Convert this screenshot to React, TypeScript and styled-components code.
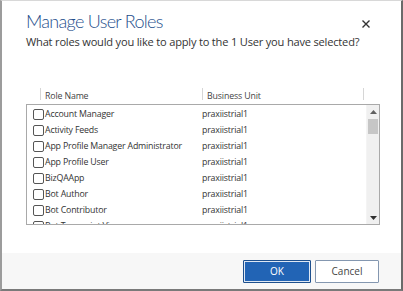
import React from "react";
import styled, { createGlobalStyle } from "styled-components";

const Global = createGlobalStyle`
  html, body { margin: 0; padding: 0; background: #fff; }
  * { box-sizing: border-box; }
`;

const Dialog = styled.div`
  width: 403px;
  height: 291px;
  display: flex;
  flex-direction: column;
  background: #fff;
  border-top: 1px solid #d8d8d8;
  border-left: 2px solid #9c9c9c;
  border-right: 2px solid #6a6a6a;
  border-bottom: 2px solid #7a7a7a;
  font-family: "Open Sans", "Noto Sans", sans-serif;
  color: #333;
  overflow: hidden;
`;

const Header = styled.div`
  display: flex;
  justify-content: space-between;
  align-items: flex-start;
  padding: 7px 30px 0 24px;
`;

const TitleBlock = styled.div`
  display: flex;
  flex-direction: column;
`;

const Title = styled.h1`
  margin: 0;
  font-family: Lato, "Open Sans", sans-serif;
  font-weight: 300;
  font-size: 18px;
  letter-spacing: -0.7px;
  line-height: 26px;
  color: #1e4e8c;
`;

const Subtitle = styled.p`
  margin: 0;
  font-size: 11.1px;
  letter-spacing: -0.2px;
  line-height: 16px;
  white-space: nowrap;
  color: #333;
`;

const Close = styled.button`
  border: none;
  background: none;
  padding: 0;
  margin-top: 11px;
  width: 10px;
  height: 10px;
  display: flex;
  cursor: pointer;
`;

const ColumnHeader = styled.div`
  display: flex;
  margin: 38px 0 0 38px;
  height: 12px;
`;

const HeaderCell = styled.div`
  width: 162px;
  border-left: 1px solid #d6d6d6;
  padding: 2px 0 0 4px;
  font-size: 8.8px;
  letter-spacing: -0.15px;
  line-height: 13px;
  color: #444;
  &:last-child { border-right: 1px solid #d6d6d6; }
`;

const ListBox = styled.div`
  margin: 4px 21px 0 24px;
  height: 121px;
  border: 1px solid #a9a9a9;
  display: flex;
  overflow: hidden;
`;

const Rows = styled.div`
  flex: 1;
  padding-top: 1px;
`;

const Row = styled.div`
  display: flex;
  align-items: center;
  height: 16px;
  padding-left: 6px;
  font-size: 8.8px;
  letter-spacing: -0.18px;
  color: #333;
`;

const NameCell = styled.div`
  width: 169px;
  display: flex;
  align-items: center;
  gap: 1px;
  white-space: nowrap;
`;

const Check = styled.span`
  width: 11px;
  height: 11px;
  border: 1px solid #555;
  border-radius: 2px;
  background: #fff;
  flex: none;
`;

const UnitCell = styled.div`
  white-space: nowrap;
`;

const Scrollbar = styled.div`
  width: 13px;
  background: #f0f0f0;
  display: flex;
  flex-direction: column;
  align-items: center;
  border-left: 1px solid #f4f4f4;
`;

const Arrow = styled.div`
  height: 13px;
  display: flex;
  align-items: center;
  justify-content: center;
  width: 100%;
`;

const Thumb = styled.div`
  width: 10px;
  height: 15px;
  background: #c6c6c6;
  margin-top: 1px;
`;

const Track = styled.div`
  flex: 1;
`;

const Spacer = styled.div`
  flex: 1;
`;

const Footer = styled.div`
  height: 36px;
  background: #f7f7f7;
  display: flex;
  justify-content: flex-end;
  align-items: center;
  gap: 4px;
  padding: 0 22px 0 0;
`;

const Button = styled.button<{ $primary?: boolean }>`
  height: 23px;
  width: ${(p) => (p.$primary ? "68px" : "64px")};
  font-family: "Open Sans", "Noto Sans", sans-serif;
  font-size: 10px;
  padding: 0;
  cursor: pointer;
  color: ${(p) => (p.$primary ? "#fff" : "#444")};
  background: ${(p) => (p.$primary ? "#2264b5" : "#fff")};
  border: 1px solid ${(p) => (p.$primary ? "#1d4f8d" : "#8497b0")};
  box-shadow: ${(p) => (p.$primary ? "inset 0 0 0 1px #dfe8f4" : "none")};
  border-radius: 1px;
`;

const roles = [
  "Account Manager",
  "Activity Feeds",
  "App Profile Manager Administrator",
  "App Profile User",
  "BizQAApp",
  "Bot Author",
  "Bot Contributor",
  "Bot Transcript Viewer",
];

export default function App() {
  return (
    <>
      <Global />
      <Dialog>
        <Header>
          <TitleBlock>
            <Title>Manage User Roles</Title>
            <Subtitle>What roles would you like to apply to the 1 User you have selected?</Subtitle>
          </TitleBlock>
          <Close aria-label="Close">
            <svg width="10" height="10" viewBox="0 0 10 10">
              <path d="M1.5 1.5 L8.5 8.5 M8.5 1.5 L1.5 8.5" stroke="#333" strokeWidth="1.4" />
            </svg>
          </Close>
        </Header>
        <ColumnHeader>
          <HeaderCell>Role Name</HeaderCell>
          <HeaderCell>Business Unit</HeaderCell>
        </ColumnHeader>
        <ListBox>
          <Rows>
            {roles.map((r) => (
              <Row key={r}>
                <NameCell>
                  <Check />
                  {r}
                </NameCell>
                <UnitCell>praxiistrial1</UnitCell>
              </Row>
            ))}
          </Rows>
          <Scrollbar>
            <Arrow>
              <svg width="7" height="4" viewBox="0 0 7 4">
                <path d="M0 4 L3.5 0 L7 4 Z" fill="#606060" />
              </svg>
            </Arrow>
            <Thumb />
            <Track />
            <Arrow>
              <svg width="7" height="4" viewBox="0 0 7 4">
                <path d="M0 0 L7 0 L3.5 4 Z" fill="#303030" />
              </svg>
            </Arrow>
          </Scrollbar>
        </ListBox>
        <Spacer />
        <Footer>
          <Button $primary>OK</Button>
          <Button>Cancel</Button>
        </Footer>
      </Dialog>
    </>
  );
}
